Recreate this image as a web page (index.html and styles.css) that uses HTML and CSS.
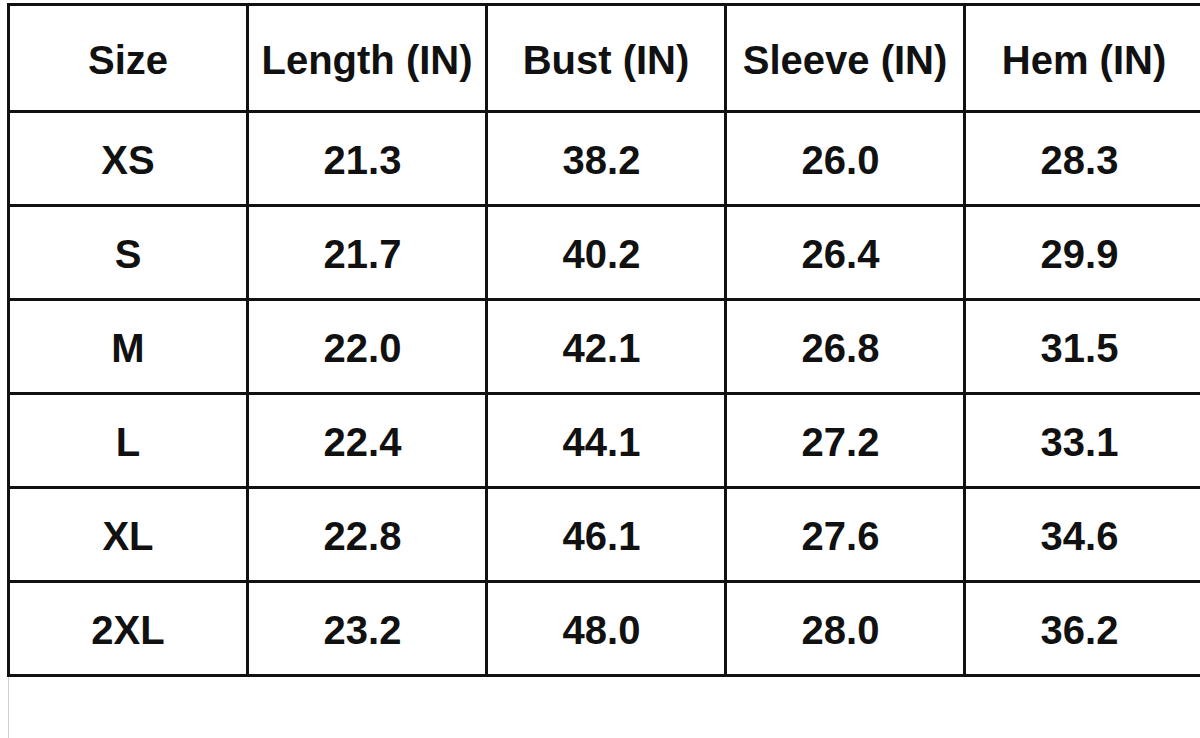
FILE: index.html
```html
<!DOCTYPE html>
<html>
<head>
<meta charset="utf-8">
<link rel="stylesheet" href="styles.css">
</head>
<body>
<div class="sheet">
  <div class="grid">
    <div class="cell head">Size</div>
    <div class="cell head">Length (IN)</div>
    <div class="cell head">Bust (IN)</div>
    <div class="cell head">Sleeve (IN)</div>
    <div class="cell head">Hem (IN)</div>

    <div class="cell">XS</div><div class="cell num">21.3</div><div class="cell num">38.2</div><div class="cell num">26.0</div><div class="cell num">28.3</div>
    <div class="cell">S</div><div class="cell num">21.7</div><div class="cell num">40.2</div><div class="cell num">26.4</div><div class="cell num">29.9</div>
    <div class="cell">M</div><div class="cell num">22.0</div><div class="cell num">42.1</div><div class="cell num">26.8</div><div class="cell num">31.5</div>
    <div class="cell">L</div><div class="cell num">22.4</div><div class="cell num">44.1</div><div class="cell num">27.2</div><div class="cell num">33.1</div>
    <div class="cell">XL</div><div class="cell num">22.8</div><div class="cell num">46.1</div><div class="cell num">27.6</div><div class="cell num">34.6</div>
    <div class="cell">2XL</div><div class="cell num">23.2</div><div class="cell num">48.0</div><div class="cell num">28.0</div><div class="cell num">36.2</div>
  </div>
  <div class="edge"></div>
</div>
</body>
</html>
```

FILE: styles.css
```css
html, body {
  margin: 0;
  padding: 0;
  background: #ffffff;
  overflow: hidden;
}

body {
  width: 1200px;
  height: 738px;
  font-family: "Liberation Sans", Arial, sans-serif;
}

.sheet {
  padding: 3px 0 0 7px;
}

.grid {
  display: grid;
  grid-template-columns: repeat(5, 236px);
  grid-template-rows: 104px repeat(6, 91px);
  gap: 3px;
  padding: 3px 0 3px 3px;
  background: #111111;
  width: max-content;
}

.cell {
  background: #ffffff;
  display: flex;
  align-items: center;
  justify-content: center;
  font-size: 40px;
  font-weight: 700;
  color: #111111;
  padding-top: 4px;
  box-sizing: border-box;
}

.num {
  padding-right: 9px;
}

.edge {
  width: 1px;
  height: 62px;
  margin-left: 1px;
  background: #cfcfcf;
}
```
